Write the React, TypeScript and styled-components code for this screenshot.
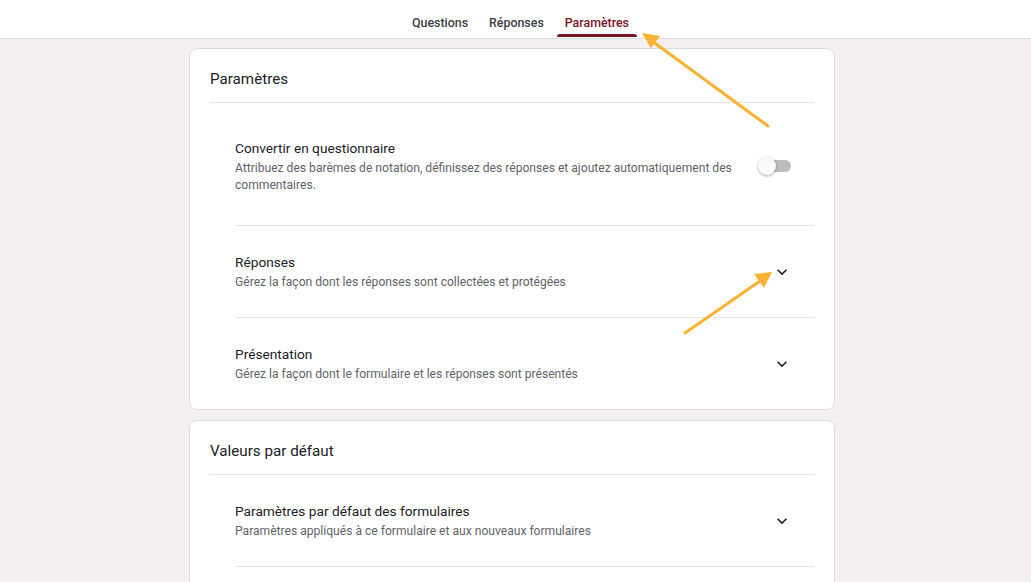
import React from "react";
import styled, {createGlobalStyle} from "styled-components";

const GlobalStyle = createGlobalStyle`
  html, body {
    margin: 0;
    padding: 0;
    background: #f4f0f0;
    font-family: Roboto, "Liberation Sans", Arial, sans-serif;
    color: #202124;
  }
  #root {
    min-height: 582px;
  }
`;

const tabs = ["Questions", "Réponses", "Paramètres"];

function ChevronDown() {
  return (
    <svg width="20" height="20" viewBox="0 0 24 24">
      <path
        d="M16.59 8.59L12 13.17 7.41 8.59 6 10l6 6 6-6z"
        fill="#202124"
      />
    </svg>
  );
}

function Arrows() {
  return (
    <Overlay width="1031" height="582" viewBox="0 0 1031 582">
      <g stroke="#fbb233" strokeWidth="3" strokeLinecap="round" fill="#fbb233">
        <line x1="768" y1="126" x2="652" y2="41" />
        <line x1="685" y1="333" x2="760" y2="281" />
      </g>
      <polygon points="642,33 660,36 651,48" fill="#fbb233" />
      <polygon points="772,272 764,288 754,274" fill="#fbb233" />
    </Overlay>
  );
}

function SettingRow({
  title,
  desc,
  control,
  first,
  last,
}: {
  title: string;
  desc: string;
  control: "toggle" | "chevron";
  first?: boolean;
  last?: boolean;
}) {
  return (
    <Row $first={first} $last={last}>
      <RowText>
        <RowTitle>{title}</RowTitle>
        <RowDesc>{desc}</RowDesc>
      </RowText>
      <RowControl>
        {control == "toggle" ? (
          <Switch>
            <Track />
            <Thumb />
          </Switch>
        ) : (
          <ChevronDown />
        )}
      </RowControl>
    </Row>
  );
}

export default function App() {
  return (
    <Page>
      <GlobalStyle />
      <Header>
        <Tabs>
          {tabs.map((t) => (
            <Tab key={t} $active={t == "Paramètres"}>
              {t}
            </Tab>
          ))}
        </Tabs>
      </Header>
      <Main>
        <Card>
          <CardTitle>Paramètres</CardTitle>
          <Rows>
            <SettingRow
              first
              title="Convertir en questionnaire"
              desc="Attribuez des barèmes de notation, définissez des réponses et ajoutez automatiquement des commentaires."
              control="toggle"
            />
            <SettingRow
              title="Réponses"
              desc="Gérez la façon dont les réponses sont collectées et protégées"
              control="chevron"
            />
            <SettingRow
              last
              title="Présentation"
              desc="Gérez la façon dont le formulaire et les réponses sont présentés"
              control="chevron"
            />
          </Rows>
        </Card>
        <Card $open>
          <CardTitle>Valeurs par défaut</CardTitle>
          <Rows>
            <SettingRow
              title="Paramètres par défaut des formulaires"
              desc="Paramètres appliqués à ce formulaire et aux nouveaux formulaires"
              control="chevron"
            />
          </Rows>
        </Card>
      </Main>
      <Arrows />
    </Page>
  );
}

const Page = styled.div`
  position: relative;
  width: 100%;
  height: 582px;
  overflow: hidden;
`;

const Header = styled.div`
  height: 38px;
  background: #fff;
  border-bottom: 1px solid #dadce0;
  display: flex;
  justify-content: center;
`;

const Tabs = styled.div`
  display: flex;
  align-items: stretch;
  gap: 5px;
  padding-left: 10px;
`;

const Tab = styled.div<{$active?: boolean}>`
  position: relative;
  display: flex;
  align-items: center;
  padding: 7px 8px 0;
  font-size: 12.4px;
  font-weight: 500;
  color: ${(p) => (p.$active ? "#7a1526" : "#3c4043")};
  &::after {
    content: "";
    display: ${(p) => (p.$active ? "block" : "none")};
    position: absolute;
    left: 0;
    right: 0;
    bottom: 1px;
    height: 3px;
    border-radius: 3px 3px 0 0;
    background: #7a1526;
  }
`;

const Main = styled.div`
  display: flex;
  flex-direction: column;
  align-items: center;
  gap: 10px;
  padding: 9px 7px 0 0;
`;

const Card = styled.div<{$open?: boolean}>`
  width: 646px;
  background: #fff;
  border: 1px solid #dadce0;
  border-radius: 8px;
  padding: 0 20px ${(p) => (p.$open ? "60px" : "0")};
  box-sizing: border-box;
`;

const CardTitle = styled.div`
  height: 54px;
  display: flex;
  align-items: center;
  padding-top: 6px;
  box-sizing: border-box;
  font-size: 15.2px;
  color: #202124;
  border-bottom: 1px solid #e3e3e3;
`;

const Rows = styled.div`
  padding-left: 25px;
`;

const Row = styled.div<{$first?: boolean; $last?: boolean}>`
  display: flex;
  align-items: center;
  padding: ${(p) => (p.$first ? "35px 0 31px" : "26px 0 26px")};
  border-bottom: ${(p) => (p.$last ? "none" : "1px solid #e3e3e3")};
`;

const RowText = styled.div`
  flex: 1;
  padding-right: 13px;
`;

const RowTitle = styled.div`
  font-size: 13.7px;
  line-height: 20px;
  color: #202124;
`;

const RowDesc = styled.div`
  font-size: 12.1px;
  line-height: 17px;
  color: #5f6368;
  margin-top: 2px;
`;

const RowControl = styled.div`
  width: 48px;
  display: flex;
  justify-content: center;
  align-items: center;
  margin-right: 8px;
`;

const Switch = styled.div`
  position: relative;
  width: 34px;
  height: 20px;
  display: flex;
  align-items: center;
  margin-right: 16px;
`;

const Track = styled.div`
  margin-left: 5px;
  width: 28px;
  height: 12px;
  border-radius: 6px;
  background: #bdbdbd;
`;

const Thumb = styled.div`
  position: absolute;
  left: 0;
  top: 1px;
  width: 18px;
  height: 18px;
  border-radius: 50%;
  background: #fafafa;
  box-shadow: 0 1px 3px rgba(0, 0, 0, 0.35);
`;

const Overlay = styled.svg`
  position: absolute;
  left: 0;
  top: 0;
  pointer-events: none;
`;
